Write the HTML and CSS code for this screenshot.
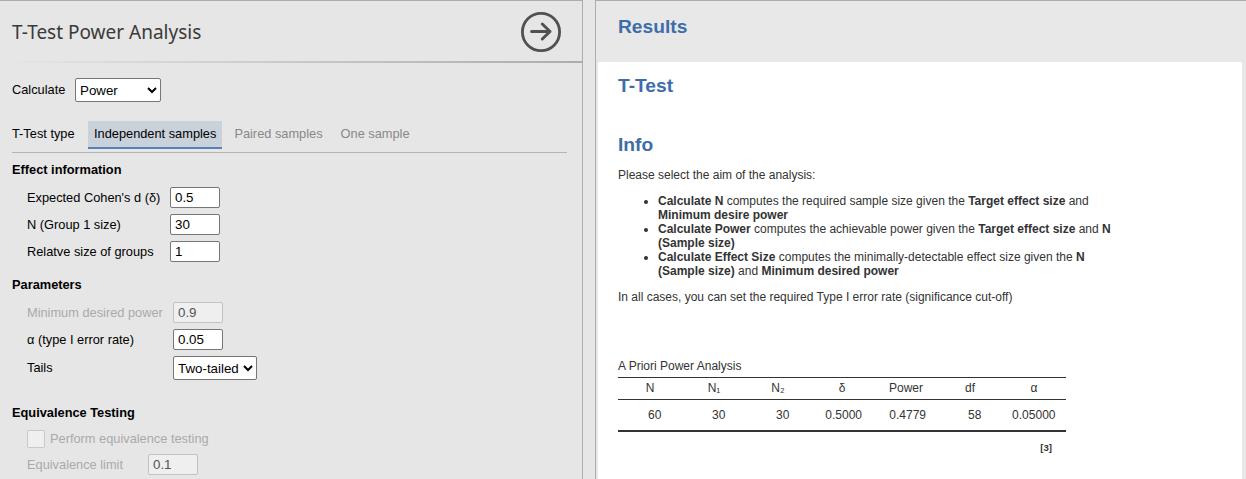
FILE: index.html
```html
<!DOCTYPE html>
<html lang="en">
<head>
<meta charset="utf-8">
<title>T-Test Power Analysis</title>
<link rel="stylesheet" href="styles.css">
</head>
<body>
<div class="app">
  <section class="options">
    <header class="options-header">
      <h1 class="title">T-Test Power Analysis</h1>
      <svg class="go" width="40" height="40" viewBox="0 0 40 40" fill="none" stroke="#515151" stroke-width="3" stroke-linecap="round" stroke-linejoin="round">
        <circle cx="20" cy="20" r="18.6" stroke-width="2.8"/>
        <path d="M10.6 19.5H29M21.3 12l7.7 7.5-7.7 7.5"/>
      </svg>
    </header>
    <div class="rule"></div>
    <div class="options-body">
      <div class="calc">
        <label class="calc-label">Calculate</label>
        <select class="select select-calc"><option>Power</option></select>
      </div>
      <div class="type">
        <span class="type-label">T-Test type</span>
        <span class="tab tab-active">Independent samples</span>
        <span class="tab">Paired samples</span>
        <span class="tab">One sample</span>
      </div>
      <h2 class="group">Effect information</h2>
      <div class="fields fields-effect">
        <label>Expected Cohen's d (δ)</label><input class="text" value="0.5">
        <label>N (Group 1 size)</label><input class="text" value="30">
        <label>Relatve size of groups</label><input class="text" value="1">
      </div>
      <h2 class="group group-params">Parameters</h2>
      <div class="fields fields-params">
        <label class="off">Minimum desired power</label><input class="text" value="0.9" disabled>
        <label>α (type I error rate)</label><input class="text" value="0.05">
        <label class="tails-label">Tails</label><select class="select select-tails"><option>Two-tailed</option></select>
      </div>
      <h2 class="group group-equiv">Equivalence Testing</h2>
      <div class="check off"><span class="box"></span>Perform equivalence testing</div>
      <div class="fields fields-equiv">
        <label class="off">Equivalence limit</label><input class="text" value="0.1" disabled>
      </div>
    </div>
  </section>
  <section class="results">
    <h1 class="heading results-heading">Results</h1>
    <div class="page">
      <h1 class="heading">T-Test</h1>
      <h2 class="heading info-heading">Info</h2>
      <p class="intro">Please select the aim of the analysis:</p>
      <ul class="aims">
        <li><b>Calculate N</b> computes the required sample size given the <b>Target effect size</b> and <b>Minimum desire power</b></li>
        <li><b>Calculate Power</b> computes the achievable power given the <b>Target effect size</b> and <b>N (Sample size)</b></li>
        <li><b>Calculate Effect Size</b> computes the minimally-detectable effect size given the <b>N (Sample size)</b> and <b>Minimum desired power</b></li>
      </ul>
      <p class="note">In all cases, you can set the required Type I error rate (significance cut-off)</p>
      <table class="power">
        <caption>A Priori Power Analysis</caption>
        <thead><tr><th>N</th><th>N₁</th><th>N₂</th><th>δ</th><th>Power</th><th>df</th><th>α</th></tr></thead>
        <tbody><tr><td>60</td><td>30</td><td>30</td><td class="dec">0.5000</td><td class="dec">0.4779</td><td>58</td><td class="long">0.05000</td></tr></tbody>
      </table>
      <div class="ref">[3]</div>
    </div>
  </section>
</div>
</body>
</html>
```
FILE: styles.css
```css
* { box-sizing: border-box; }
body { margin: 0; background: #e6e6e6; font-family: "Liberation Sans", Arial, sans-serif; font-size: 12.8px; color: #000; }
h1, h2, p, ul { margin: 0; }
.app { display: flex; gap: 12px; height: 479px; overflow: hidden; }

.options { width: 583px; flex: none; border-top: 1px solid #acacac; border-right: 1px solid #acacac; overflow: hidden; }
.options-header { display: flex; justify-content: space-between; align-items: center; height: 60px; padding: 2px 21px 0 12px; }
.title { font: 400 19px/26px "Noto Sans", sans-serif; color: #3a3a3a; }
.rule { height: 2px; background: linear-gradient(to right, #e6e6e6 0, #acacac 100%); }
.options-body { padding: 15px 15px 0 12px; }
.calc { display: flex; height: 24px; line-height: 24px; }
.calc-label { width: 63px; }
.select { height: 24px; padding: 0; margin: 0; font: 13.333px "Liberation Sans", Arial, sans-serif; color: #000; background: #fff; border: 1px solid #767676; border-radius: 2px; }
.select-calc { width: 86px; }
.select-tails { width: 84px; }
.type { display: flex; margin-top: 19px; height: 32px; line-height: 25px; border-bottom: 1px solid #b4b4b4; }
.type-label { width: 76px; }
.tab { height: 28px; padding: 0 6px; color: #888; }
.tab-active { color: #000; background: #c9d1db; border-bottom: 2px solid #5580b8; }
.tab:not(.tab-active) { margin-left: 6px; }
.group { margin-top: 9px; font-size: 12.8px; line-height: 16px; font-weight: bold; }
.fields { display: grid; row-gap: 6px; padding-left: 15px; line-height: 21px; }
.fields-effect { grid-template-columns: 143px 50px; margin-top: 9px; }
.group-params { margin-top: 15px; }
.fields-params { grid-template-columns: 146px 84px; margin-top: 9px; }
.tails-label { line-height: 24px; }
.group-equiv { margin-top: 25px; }
.text { width: 50px; height: 21px; padding: 1px 4px; font: 13.333px "Liberation Sans", Arial, sans-serif; color: #000; background: #fff; border: 1px solid #767676; border-radius: 2px; }
.text:disabled { color: #545454; background: #efefef; border-color: #c2c2c2; }
.off { color: #aaa; }
.check { display: flex; gap: 5px; margin: 9px 0 6px 15px; line-height: 18px; }
.box { width: 18px; height: 18px; background: #efefef; border: 1px solid #c9c9c9; border-radius: 2px; }
.fields-equiv { grid-template-columns: 121px 50px; }

.results { flex: 1; border-top: 1px solid #acacac; border-left: 1px solid #acacac; padding: 0 4px 0 2px; background: #e8e8e8; font-size: 12px; line-height: 14px; color: #333; }
.heading { font-size: 19.2px; line-height: 22px; font-weight: bold; color: #3e6da9; }
.results-heading { height: 61px; padding: 15px 0 0 20px; }
.page { height: 418px; padding: 13px 20px 0; background: #fff; }
.info-heading { margin-top: 37px; }
.intro { margin-top: 12px; }
.aims { width: 500px; margin-top: 12px; padding-left: 40px; }
.note { margin-top: 12px; }
.power { width: 448px; margin-top: 54px; table-layout: fixed; border-collapse: separate; border-spacing: 0; border-top: 1px solid #333; border-bottom: 2px solid #333; }
.power caption { height: 19px; text-align: left; line-height: 16px; }
.power th { height: 22px; padding: 0 0 2px; font-weight: normal; border-bottom: 1px solid #333; }
.power td { height: 30px; padding: 0 20.6px 0 0; text-align: right; }
.power .dec { padding-right: 12px; }
.power .long { padding-right: 10.5px; }
.ref { width: 434px; margin-top: 9px; text-align: right; font-size: 9.6px; font-weight: bold; }
```
